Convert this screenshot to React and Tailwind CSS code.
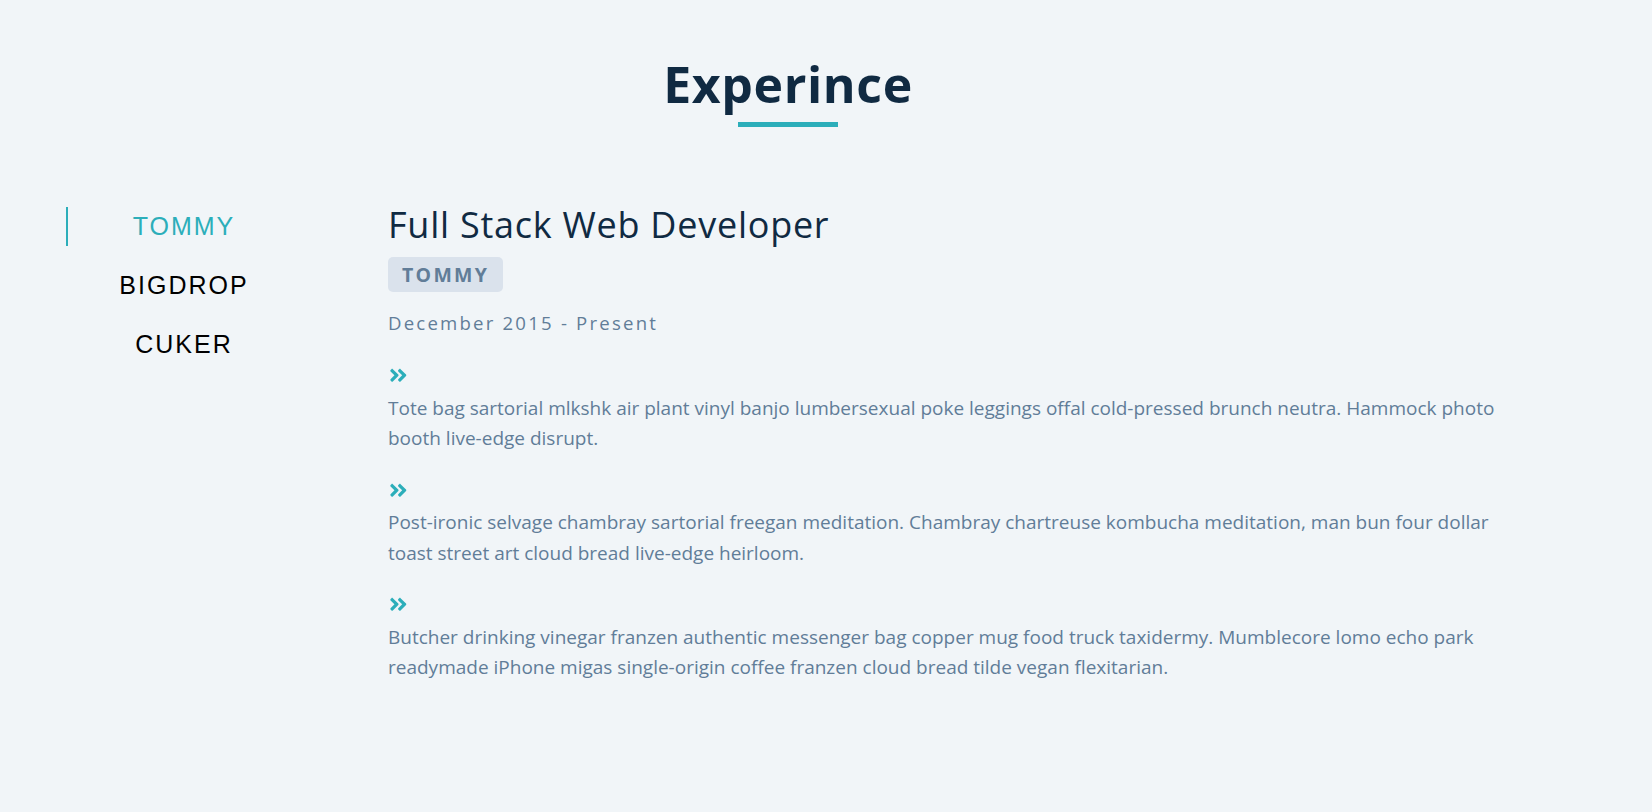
import React, { useState } from "react";
import { FaAngleDoubleRight } from "react-icons/fa";

const jobs = [
  {
    company: "tommy",
    title: "Full Stack Web Developer",
    dates: "December 2015 - Present",
    duties: [
      "Tote bag sartorial mlkshk air plant vinyl banjo lumbersexual poke leggings offal cold-pressed brunch neutra. Hammock photo booth live-edge disrupt.",
      "Post-ironic selvage chambray sartorial freegan meditation. Chambray chartreuse kombucha meditation, man bun four dollar toast street art cloud bread live-edge heirloom.",
      "Butcher drinking vinegar franzen authentic messenger bag copper mug food truck taxidermy. Mumblecore lomo echo park readymade iPhone migas single-origin coffee franzen cloud bread tilde vegan flexitarian.",
    ],
  },
  { company: "bigdrop", title: "Front-End Engineer", dates: "May 2015 - December 2015", duties: [] },
  { company: "cuker", title: "Engineering Intern", dates: "May 2014 - September 2015", duties: [] },
];

export default function App() {
  const [value, setValue] = useState(0);
  const { company, title, dates, duties } = jobs[value];

  return (
    <main className="min-h-screen bg-[#f1f5f8] font-['Open_Sans',sans-serif]">
      <section className="pt-[59px]">
        <div className="pr-[76px] text-center">
          <h2 className="text-[50px] leading-none font-bold tracking-[0.6px] text-[#102a42]">
            Experince
          </h2>
          <div className="mx-auto mt-[13px] h-[5px] w-[100px] bg-[#2caeba]"></div>
        </div>

        <div className="mt-[76px] grid grid-cols-[234px_1fr] gap-x-[88px] pl-[66px] pr-[142px]">
          {/* buttons */}
          <div className="mt-[4px] flex flex-col gap-[20px]">
            {jobs.map((job, index) => (
              <button
                key={job.company}
                onClick={() => setValue(index)}
                className={
                  index === value
                    ? "flex h-[39px] items-center justify-center border-l-2 border-[#2caeba] font-['Liberation_Sans',Arial,sans-serif] text-[25px] uppercase tracking-[2px] text-[#2caeba]"
                    : "flex h-[39px] items-center justify-center border-l-2 border-transparent font-['Liberation_Sans',Arial,sans-serif] text-[25px] uppercase tracking-[2px] text-black"
                }
              >
                {job.company}
              </button>
            ))}
          </div>

          {/* job info */}
          <article>
            <h3 className="text-[36px] leading-[44px] font-normal tracking-[0.75px] text-[#102a42]">
              {title}
            </h3>
            <h4 className="mt-[10px] inline-flex h-[35px] items-center rounded-[5px] bg-[#dae2ec] px-[14px] text-[19.5px] font-bold uppercase tracking-[2.3px] text-[#617d98]">
              {company}
            </h4>
            <p className="mt-[17px] text-[18.6px] leading-[28px] tracking-[2.2px] text-[#617d98]">
              {dates}
            </p>
            <div className="mt-[28px]">
              {duties.map((duty, index) => (
                <div key={index} className="mb-[26px]">
                  <FaAngleDoubleRight size={20.6} className="block text-[#2caeba]" />
                  <p className="mt-[7px] text-[19px] leading-[30.5px] text-[#617d98]">{duty}</p>
                </div>
              ))}
            </div>
          </article>
        </div>
      </section>
    </main>
  );
}
